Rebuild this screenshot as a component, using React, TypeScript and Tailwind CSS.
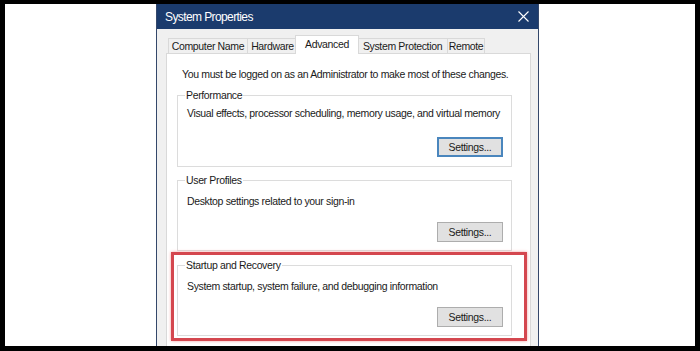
import React from "react";

const tabs = [
  { label: "Computer Name", w: "w-[79px]" },
  { label: "Hardware", w: "w-[50px]" },
  { label: "Advanced", w: "w-[64px]", active: true },
  { label: "System Protection", w: "w-[90px]" },
  { label: "Remote", w: "w-[38px]" },
];

const txt = "text-[10.5px] leading-[13px] tracking-[-0.35px] text-[#1a1a1a] whitespace-nowrap";

const SettingsButton = ({ focused }: { focused?: boolean }) => (
  <div className="flex justify-end">
    <button
      type="button"
      className={
        "w-[66px] h-[20px] bg-[#e1e1e1] " +
        txt +
        (focused ? " border-2 border-[#4a86bd]" : " border border-[#adadad]")
      }
    >
      Settings...
    </button>
  </div>
);

const Group = ({ title, text, focused }: { title: string; text: string; focused?: boolean }) => (
  <fieldset className={"border border-[#dcdcdc] pl-[9px] pr-[8px] " + (focused ? "pb-[9px]" : "pb-[8px]")}>
    <legend className={"-ml-[2px] px-[1px] " + txt}>{title}</legend>
    <p className={(focused ? "mt-[5px] " : "mt-[8px] ") + txt}>{text}</p>
    <div className={focused ? "mt-[17px]" : "mt-[14px]"}>
      <SettingsButton focused={focused} />
    </div>
  </fieldset>
);

export default function App() {
  return (
    <div className="w-[700px] h-[351px] bg-black pt-[4px] px-[5px] pb-[5px] overflow-hidden font-['Liberation_Sans',Arial,sans-serif]">
      <div className="h-full bg-white pl-[151px] overflow-hidden">
        <div className="w-[383px] h-[400px] border-x border-[#34476a] bg-[#f0f0f0]">
          <div className="h-[25px] bg-[#1b3b6d] flex items-center justify-between pl-[8px] pr-[9px]">
            <span className="text-white text-[12px] tracking-[-0.6px] whitespace-nowrap">System Properties</span>
            <svg width="11" height="11" viewBox="0 0 11 11" className="mt-[-1px]">
              <path d="M0.5 0.5 L10.5 10.5 M10.5 0.5 L0.5 10.5" stroke="white" strokeWidth="1.1" />
            </svg>
          </div>
          <div className="pt-[6px] pl-[9px] pr-[7px]">
            <div className="flex items-end pl-[2px] h-[18px]">
              {tabs.map((t, i) =>
                t.active ? (
                  <div
                    key={t.label}
                    className={`${t.w} h-[19px] -mx-[2px] -mb-px relative z-10 bg-white border-x border-t border-[#d9d9d9] flex items-center justify-center pb-[2px] ${txt}`}
                  >
                    {t.label}
                  </div>
                ) : (
                  <div
                    key={t.label}
                    className={`${t.w} h-[15px] bg-[#f0f0f0] border-t border-l border-[#d9d9d9] ${
                      i === tabs.length - 1 ? "border-r" : ""
                    } flex items-center justify-center ${txt}`}
                  >
                    {t.label}
                  </div>
                )
              )}
            </div>
            <div className="bg-white border border-[#d9d9d9] h-[320px] pl-[10px] pr-[18px]">
              <p className={"pt-[14px] pl-[5px] " + txt}>
                You must be logged on as an Administrator to make most of these changes.
              </p>
              <div className="mt-[8px]">
                <Group
                  title="Performance"
                  text="Visual effects, processor scheduling, memory usage, and virtual memory"
                  focused
                />
              </div>
              <div className="mt-[7px]">
                <Group title="User Profiles" text="Desktop settings related to your sign-in" />
              </div>
              <div className="mt-[1px] -ml-[6px] -mr-[15px] border-[3px] border-[#d4474f] shadow-[0_0_3px_#f0a0a0] pl-[3px] pr-[12px] pt-[4px] pb-[2px]">
                <Group
                  title="Startup and Recovery"
                  text="System startup, system failure, and debugging information"
                />
              </div>
            </div>
          </div>
        </div>
      </div>
    </div>
  );
}
